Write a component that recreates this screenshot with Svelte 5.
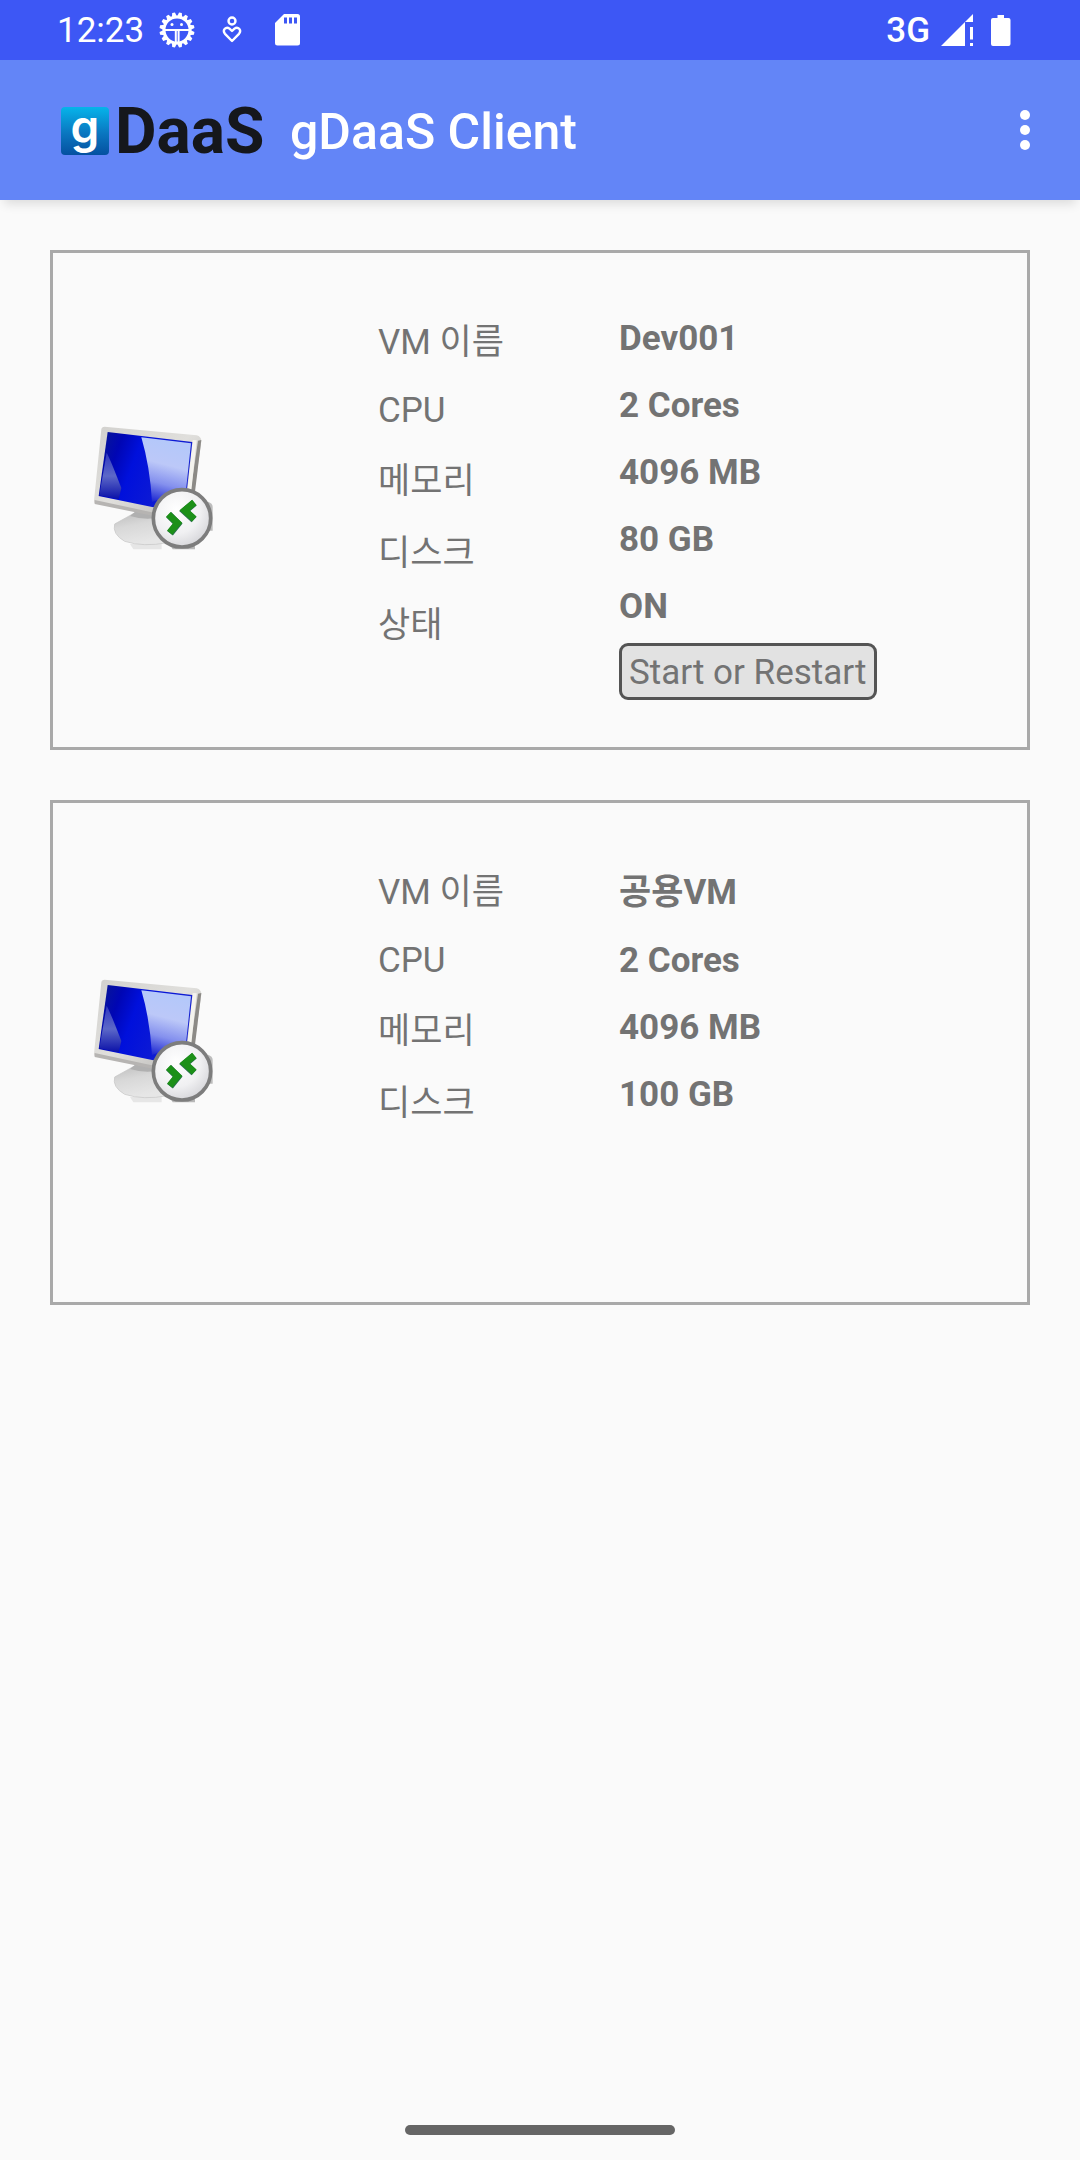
<script>
  const machines = [
    {
      labels: ['VM 이름', 'CPU', '메모리', '디스크', '상태'],
      values: ['Dev001', '2 Cores', '4096 MB', '80 GB', 'ON'],
      action: 'Start or Restart'
    },
    {
      labels: ['VM 이름', 'CPU', '메모리', '디스크'],
      values: ['공용VM', '2 Cores', '4096 MB', '100 GB'],
      action: ''
    }
  ];
  const hasHangul = (text) => /[\uac00-\ud7a3]/.test(text);
  const teeth = Array.from({ length: 16 }, (_, i) => i * 22.5);
</script>

<div class="screen">
  <div class="status">
    <span class="clock">12:23</span>
    <svg class="gear" viewBox="0 0 36 36" width="36" height="36" aria-hidden="true">
      {#each teeth as angle}
        <path d="M15.2 5.500L16.600 0.500H19.400L20.800 5.500Z" fill="#fff" transform="rotate({angle + 11.25} 18 18)" />
      {/each}
      <circle cx="18" cy="18" r="13" fill="none" stroke="#fff" stroke-width="3" />
      <path d="M5 18H31M16.800 18V30M19.600 18V30" stroke="#fff" stroke-width="2" fill="none" />
      <circle cx="13" cy="12.500" r="1.500" fill="#fff" />
      <circle cx="22.500" cy="12.500" r="1.500" fill="#fff" />
    </svg>
    <svg class="heart" viewBox="0 0 20 28" width="20" height="28" aria-hidden="true">
      <circle cx="10" cy="5" r="3.500" fill="none" stroke="#fff" stroke-width="2.400" />
      <path d="M10 25 L3 17.800 C0 14 4 10 7.500 12.600 L10 15 L12.500 12.600 C16 10 20 14 17 17.800 Z" fill="none" stroke="#fff" stroke-width="2.400" stroke-linejoin="round" />
    </svg>
    <svg class="sd" viewBox="0 0 26 32" width="26" height="32" aria-hidden="true">
      <path d="M9 0H22.500Q25 0 25 2.500V29Q25 31.500 22.500 31.500H2.500Q0 31.500 0 29V9Z" fill="#fff" />
      <path d="M9 3.500H12V9.500H9ZM14 3.500H17V9.500H14ZM19 3.500H22V9.500H19Z" fill="#3d57f5" />
    </svg>
    <span class="network">3G</span>
    <svg class="signal" viewBox="0 0 33 32" width="33" height="32" aria-hidden="true">
      <path d="M0 32L32 0V8H24V32Z" fill="#fff" />
      <path d="M29 13H32V25.500H29ZM29 29H32V32H29Z" fill="#fff" />
    </svg>
    <svg class="battery" viewBox="0 0 20 31" width="20" height="31" aria-hidden="true">
      <path d="M6.500 0H13V3H17.500Q19.500 3 19.500 5V29Q19.500 31 17.500 31H2Q0 31 0 29V5Q0 3 2 3H6.500Z" fill="#fff" />
    </svg>
  </div>

  <header>
    <div class="logo">
      <span class="mark">g</span>
      <span class="brand">DaaS</span>
    </div>
    <h1>gDaaS Client</h1>
    <button class="more" aria-label="More options">
      <svg viewBox="0 0 10 40" width="10" height="40" aria-hidden="true">
        <circle cx="5" cy="5" r="5" fill="#fff" />
        <circle cx="5" cy="20" r="5" fill="#fff" />
        <circle cx="5" cy="35" r="5" fill="#fff" />
      </svg>
    </button>
  </header>

  <main>
    {#each machines as machine, i}
      <section class="card" class:idle={!machine.action}>
        <svg class="computer" viewBox="0 0 450 555" width="150" height="185" aria-hidden="true">
          <defs>
            <linearGradient id="frame{i}" x1="0" y1="0" x2="1" y2="1">
              <stop offset="0" stop-color="#d2d1ce" />
              <stop offset="0.5" stop-color="#e0dfdc" />
              <stop offset="1" stop-color="#b4b3b0" />
            </linearGradient>
            <linearGradient id="screen{i}" x1="0" y1="0" x2="1" y2="0.3">
              <stop offset="0" stop-color="#0a1a90" />
              <stop offset="0.25" stop-color="#0006b4" />
              <stop offset="0.45" stop-color="#0010dc" />
              <stop offset="1" stop-color="#1420d0" />
            </linearGradient>
            <linearGradient id="glare{i}" x1="0.2" y1="0" x2="0" y2="1">
              <stop offset="0" stop-color="#b4c8fa" />
              <stop offset="0.35" stop-color="#bcc8f8" />
              <stop offset="0.65" stop-color="#8490ee" />
              <stop offset="1" stop-color="#0a14cc" />
            </linearGradient>
            <linearGradient id="corner{i}" x1="0" y1="0" x2="0" y2="1">
              <stop offset="0" stop-color="#3038c0" />
              <stop offset="0.5" stop-color="#5c68c8" />
              <stop offset="1" stop-color="#0a10a8" />
            </linearGradient>
            <linearGradient id="base{i}" x1="0" y1="0" x2="0.3" y2="1">
              <stop offset="0" stop-color="#b8b8b8" />
              <stop offset="0.5" stop-color="#d8d8d8" />
              <stop offset="1" stop-color="#e6e6e6" />
            </linearGradient>
            <radialGradient id="badge{i}" cx="0.4" cy="0.35" r="0.7">
              <stop offset="0" stop-color="#ffffff" />
              <stop offset="0.6" stop-color="#f0f0f2" />
              <stop offset="1" stop-color="#d4d4d8" />
            </radialGradient>
          </defs>
          <path d="M384 275Q398 280 398 290V362H384Z" fill="#bcbcbc" />
          <path d="M150 402H245V418H160Z" fill="#e6e6e6" />
          <path d="M268 400H345V418H278Z" fill="#b8b8b8" />
          <path d="M165 308L104 342Q96 372 134 394Q190 412 262 398L240 300Z" fill="url(#base{i})" stroke="#c4c4c4" stroke-width="2" />
          <path d="M172 300L225 308L222 325Q190 330 150 318Z" fill="#b0b0b0" />
          <path d="M64 58Q65 50 74 50L350 76Q364 80 364 94L342 250L222 316L44 280Q41 278 42 272Z" fill="url(#frame{i})" />
          <path d="M354 92L364 90L345 245L332 242Z" fill="#8c8a86" />
          <path d="M338 90L350 91L334 242L322 240Z" fill="#f4f3ee" />
          <path d="M44 270L222 308V318L44 282Z" fill="#b6b4b2" />
          <path d="M83 66L337 96L320 245L220 292L56 258Z" fill="url(#screen{i})" />
          <path d="M184 82L333 100L318 240L216 276Q210 170 184 82Z" fill="url(#glare{i})" />
          <path d="M80 128Q92 150 124 234L116 268L58 256Z" fill="url(#corner{i})" />
          <circle cx="306" cy="325" r="86" fill="url(#badge{i})" stroke="#7d7d7d" stroke-width="11" />
          <path d="M343 278L314 303L342 329M266 314L293 341L270 370" fill="none" stroke="#2c7050" stroke-width="22" />
          <path d="M343 277L314 301L343 327M265 313L293 339L269 368" fill="none" stroke="#1c9018" stroke-width="20" />
        </svg>
        <div class="labels">
          {#each machine.labels as label}
            <div class="row" class:tall={hasHangul(label)}>{label}</div>
          {/each}
        </div>
        <div class="values">
          {#each machine.values as value}
            <div class="row" class:tall={hasHangul(value)}>{value}</div>
          {/each}
          {#if machine.action}
            <button class="action">{machine.action}</button>
          {/if}
        </div>
      </section>
    {/each}
  </main>

  <footer><div class="handle"></div></footer>
</div>

<style>
  :global(body) {
    margin: 0;
    background: #fafafa;
  }
  .screen {
    min-height: 100vh;
    display: flex;
    flex-direction: column;
    font-family: Roboto, 'Noto Sans CJK KR', sans-serif;
    font-size: 35px;
    color: #737373;
  }
  .status {
    height: 60px;
    box-sizing: border-box;
    padding: 0 69px 0 57px;
    display: flex;
    align-items: center;
    background: #3d57f5;
    color: #fff;
  }
  .gear {
    margin-left: 15px;
  }
  .heart {
    margin-left: 27px;
  }
  .sd {
    margin-left: 33px;
  }
  .network {
    margin-left: auto;
    font-weight: 500;
  }
  .signal {
    margin-left: 11px;
  }
  .battery {
    margin-left: 17px;
  }
  header {
    height: 140px;
    box-sizing: border-box;
    padding: 0 40px 0 61px;
    display: flex;
    align-items: center;
    background: #6385f7;
    color: #fff;
    box-shadow: 0 8px 10px -4px rgba(0, 0, 0, 0.12);
  }
  .logo {
    width: 220px;
    padding-top: 2px;
    display: flex;
    align-items: center;
    gap: 6px;
  }
  .mark {
    width: 48px;
    height: 48px;
    border-radius: 4px;
    background: linear-gradient(#06b4ea, #0a76c0 55%, #0450a0);
    font: 600 46px/38px Inter, sans-serif;
    text-align: center;
  }
  .brand {
    padding-top: 2px;
    color: #15171c;
    font-size: 64px;
    font-weight: 700;
    line-height: 64px;
  }
  h1 {
    margin: 0 auto 0 9px;
    padding-top: 4px;
    font-size: 50px;
    font-weight: 500;
    line-height: 60px;
  }
  .more {
    width: 30px;
    height: 80px;
    padding: 0;
    border: 0;
    background: none;
    display: grid;
    place-items: center;
  }
  main {
    padding: 50px;
    display: grid;
    gap: 50px;
  }
  .card {
    box-sizing: border-box;
    border: 3px solid #a9a9a9;
    padding: 52px 0 47px;
    display: grid;
    grid-template-columns: 325fr 241fr 408fr;
  }
  .idle {
    min-height: 505px;
  }
  .computer {
    align-self: center;
    margin-left: 27px;
  }
  .row {
    line-height: 67px;
  }
  .tall {
    padding: 4px 0 1px;
  }
  .values {
    font-weight: 700;
  }
  .action {
    display: block;
    height: 57px;
    margin-top: 3px;
    padding: 3px 8px 0 7px;
    border: 3px solid #545454;
    border-radius: 9px;
    background: #e2e2e2;
    color: #737373;
    font: 400 35px/48px Roboto, sans-serif;
  }
  footer {
    margin-top: auto;
    padding-bottom: 25px;
    display: flex;
    justify-content: center;
  }
  .handle {
    width: 25%;
    height: 10px;
    border-radius: 5px;
    background: #666;
  }
</style>
